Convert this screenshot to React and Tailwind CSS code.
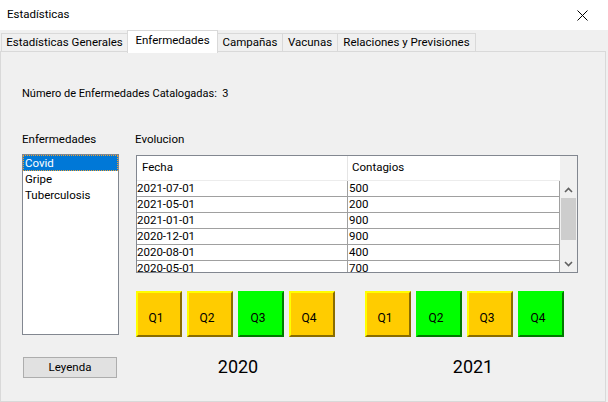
import React from "react";

const font = { fontFamily: 'Roboto, "Noto Sans", "Liberation Sans", sans-serif' };

function QBtn({ label, color }) {
  const green = color === "green";
  return (
    <div
      className={
        "w-[46px] h-[46px] border-2 flex items-center justify-center pt-[7px] pr-[6px] text-[12px] text-black " +
        (green
          ? "bg-[#00ff00] border-t-[#00ff00] border-l-[#00ff00] border-b-[#007a00] border-r-[#007a00]"
          : "bg-[#ffcc00] border-t-[#ffff00] border-l-[#ffff00] border-b-[#8a6d00] border-r-[#8a6d00]")
      }
    >
      {label}
    </div>
  );
}

const rows = [
  ["2021-07-01", "500"],
  ["2021-05-01", "200"],
  ["2021-01-01", "900"],
  ["2020-12-01", "900"],
  ["2020-08-01", "400"],
  ["2020-05-01", "700"],
];

export default function App() {
  return (
    <div
      className="w-[608px] h-[402px] bg-[#f0f0f0] flex flex-col overflow-hidden text-[11.5px] text-black"
      style={font}
    >
      {/* title bar */}
      <div className="h-[30px] bg-white flex items-center justify-between pl-[7px] pr-[20px] shrink-0">
        <span>Estadísticas</span>
        <svg width="11" height="11" viewBox="0 0 11 11">
          <path d="M0.5 0.5 L10.5 10.5 M10.5 0.5 L0.5 10.5" stroke="#000" strokeWidth="1" />
        </svg>
      </div>

      {/* tabs */}
      <div className="h-[22px] flex items-start pl-[1px] shrink-0 relative z-10 whitespace-nowrap">
        <div className="mt-[3px] h-[19px] w-[126px] border border-[#d9d9d9] border-r-0 bg-[#f0f0f0] flex items-center justify-center leading-none">
          Estadísticas Generales
        </div>
        <div className="h-[23px] w-[91px] border border-[#d9d9d9] border-b-0 bg-white flex items-center justify-center leading-none pb-[2px]">
          Enfermedades
        </div>
        <div className="mt-[3px] h-[19px] w-[65px] border border-[#d9d9d9] border-l-0 bg-[#f0f0f0] flex items-center justify-center leading-none">
          Campañas
        </div>
        <div className="mt-[3px] h-[19px] w-[55px] border border-[#d9d9d9] border-l-0 bg-[#f0f0f0] flex items-center justify-center leading-none">
          Vacunas
        </div>
        <div className="mt-[3px] h-[19px] w-[138px] border border-[#d9d9d9] border-l-0 bg-[#f0f0f0] flex items-center justify-center leading-none">
          Relaciones y Previsiones
        </div>
      </div>

      {/* panel */}
      <div className="flex-1 w-[606px] border border-[#d9d9d9] bg-[#f0f0f0] -mt-px flex flex-col pl-[21px]">
        <div className="mt-[34px] h-[16px] leading-[16px] text-[11px]">
          Número de Enfermedades Catalogadas:&nbsp; 3
        </div>

        <div className="mt-[29px] flex">
          {/* left column */}
          <div className="w-[97px] flex flex-col">
            <div className="h-[16px] leading-[16px]">Enfermedades</div>
            <div className="mt-[7px] h-[181px] w-[97px] border border-[#828790] bg-white flex flex-col">
              <div className="h-[16px] leading-[14px] bg-[#0078d7] text-white px-[1px] border border-dotted border-[#f0a030]">
                Covid
              </div>
              <div className="h-[16px] leading-[16px] px-[2px]">Gripe</div>
              <div className="h-[16px] leading-[16px] px-[2px]">Tuberculosis</div>
            </div>
            <div className="mt-[22px] ml-[1px] h-[21px] w-[94px] border border-[#adadad] bg-[#e1e1e1] flex items-center justify-center">
              Leyenda
            </div>
          </div>

          {/* right column */}
          <div className="ml-[17px] w-[442px] flex flex-col">
            <div className="h-[16px] leading-[16px] -ml-px">Evolucion</div>
            <div className="mt-[8px] h-[118px] w-[442px] border border-[#828790] bg-white flex overflow-hidden">
              <div className="w-[423px] flex flex-col">
                <div className="h-[25px] shrink-0 flex border-b border-[#ececec]">
                  <div className="w-[211px] border-r border-[#e5e5e5] pl-[5px] flex items-center">Fecha</div>
                  <div className="flex-1 pl-[4px] flex items-center">Contagios</div>
                </div>
                <div className="flex-1 flex flex-col border-r border-[#a0a0a0]">
                  {rows.map(([d, c]) => (
                    <div key={d} className="h-[16px] shrink-0 flex border-b border-[#a0a0a0] leading-[15px]">
                      <div className="w-[211px] border-r border-[#a0a0a0] pl-[0px]">{d}</div>
                      <div className="flex-1 pl-[1px]">{c}</div>
                    </div>
                  ))}
                </div>
              </div>
              <div className="w-[17px] bg-[#f0f0f0] flex flex-col items-center">
                <div className="h-[25px] w-full" />
                <div className="h-[17px] flex items-center justify-center">
                  <svg width="9" height="6" viewBox="0 0 9 6">
                    <path d="M1 5 L4.5 1.5 L8 5" stroke="#606060" strokeWidth="1.6" fill="none" />
                  </svg>
                </div>
                <div className="w-[15px] h-[42px] bg-[#cdcdcd]" />
                <div className="flex-1" />
                <div className="h-[17px] flex items-center justify-center">
                  <svg width="9" height="6" viewBox="0 0 9 6">
                    <path d="M1 1 L4.5 4.5 L8 1" stroke="#606060" strokeWidth="1.6" fill="none" />
                  </svg>
                </div>
              </div>
            </div>

            <div className="mt-[18px] flex">
              <div className="flex gap-[5px]">
                <QBtn label="Q1" color="orange" />
                <QBtn label="Q2" color="orange" />
                <QBtn label="Q3" color="green" />
                <QBtn label="Q4" color="orange" />
              </div>
              <div className="ml-[30px] flex gap-[5px]">
                <QBtn label="Q1" color="orange" />
                <QBtn label="Q2" color="green" />
                <QBtn label="Q3" color="orange" />
                <QBtn label="Q4" color="green" />
              </div>
            </div>

            <div className="mt-[18px] flex">
              <div className="ml-[3px] w-[198px] text-center text-[18px] leading-[24px]">2020</div>
              <div className="ml-[37px] w-[198px] text-center text-[18px] leading-[24px]">2021</div>
            </div>
          </div>
        </div>
      </div>
    </div>
  );
}
